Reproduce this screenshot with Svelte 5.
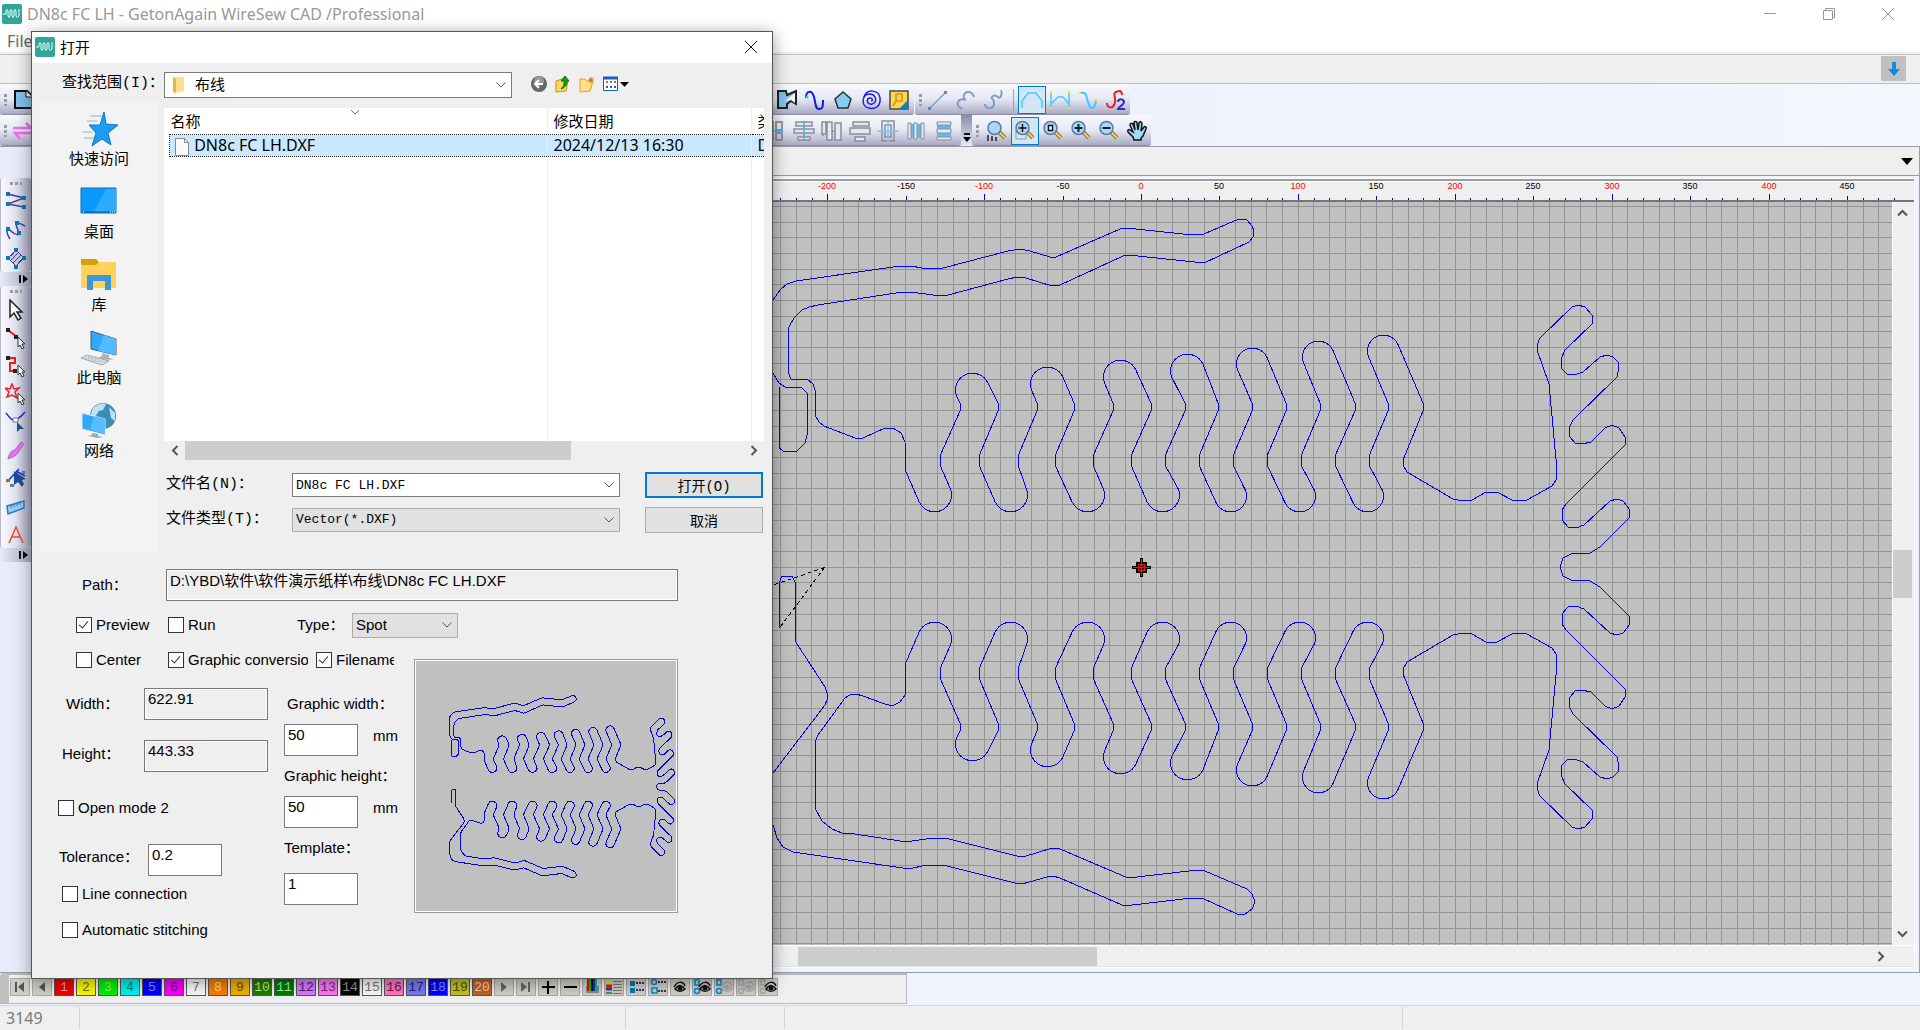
<script>
    // drawing space: one unit is one pixel, (ORIGIN_X, ORIGIN_Y) is the zero of the ruler
    const ORIGIN_X = 1141
    const ORIGIN_Y = 567
    const STEP = 15.69
    const LEFT = 48
    const TOP = 202

    const columns = []
    for (let i = -70; i <= 120; i++) columns.push(Math.round(ORIGIN_X - 0.2 + i * STEP))
    const rows = []
    for (let i = -30; i <= 60; i++) rows.push(Math.round(ORIGIN_Y - 0.2 + i * STEP))

    const ticks = []
    for (let v = -690; v <= 480; v += 10) {
        ticks.push({
            value: v,
            x: Math.round(ORIGIN_X + (v / 10) * STEP) - LEFT,
            size: v % 100 === 0 ? 6 : v % 50 === 0 ? 4 : 2,
        })
    }

    // serpentine: bottom caps, top caps and the knees between them
    const bottomCaps = [935, 1011, 1088, 1163, 1231, 1300, 1368]
    const topCaps = [[972, 372], [1047, 366], [1120, 359], [1187, 353], [1252, 347], [1318, 340], [1383, 334]]
    const upperKnees = [960, 998, 1037, 1074, 1113, 1151, 1185, 1218, 1252, 1286, 1320, 1355, 1388, 1423]
    const lowerKnees = [940, 979, 1018, 1055, 1093, 1131, 1165, 1199, 1233, 1267, 1301, 1335, 1369]

    function serpentine() {
        let d = "M905.7 471"
        for (let i = 0; i < 7; i++) {
            const r = i < 4 ? 17 : 16
            const dx = r * 0.93
            const dy = r * 0.36
            const bx = bottomCaps[i]
            const by = 513 - r
            const [tx, top] = topCaps[i]
            const ty = top + r
            d += `L${bx - dx} ${by + dy}A${r} ${r} 0 0 0 ${bx + dx} ${by - dy}`
            d += `L${lowerKnees[i * 2]} 465V456L${upperKnees[i * 2]} 411V403`
            d += `L${tx - dx} ${ty + dy}A${r} ${r} 0 0 1 ${tx + dx} ${ty - dy}`
            d += `L${upperKnees[i * 2 + 1]} 403V411`
            if (i < 6) d += `L${lowerKnees[i * 2 + 1]} 456V465`
        }
        return d + "L1403 460L1403 465L1407 472L1453 499L1463 501L1472 500L1486 492L1497 492L1512 500L1519 501L1527 500L1552 486L1556 480L1557 470L1549 384L1537 350V345L1540 338L1572 307L1578 305L1585 307L1592 315V324L1565 350L1561 359L1562 369L1567 374L1574 375L1583 372L1600 357L1607 355L1613 357L1618 362L1619 367L1617 377L1573 420L1569 428L1570 437L1575 443L1582 444L1591 442L1605 428L1612 425L1619 428L1625 437V445L1566 504L1562 510V520L1568 527L1576 528L1584 525L1610 501L1617 499L1623 501L1630 510L1629 518L1600 547L1590 553L1571 554L1563 558L1560 567"
    }

    const body = serpentine()
    const upperArm = "M779.5 387V448L783 451H797L805 443L807 435V393L801 387H785L779 383L774 375L770 366V318L773 300L780 290L787 284L796 281L900 266H911L922 268L933 268H943L1008 251L1020 249L1030 251L1050 257H1056L1120 229L1126 228L1193 235L1204 234L1234 221L1240 219L1247 220L1252 226L1254 231L1253 237L1249 242L1204 263L1128 255L1123 256L1060 285L1052 286L1026 278L1017 277L1008 279L948 295L933 295L911 292L896 293L818 305L809 307L802 310L794 318L789 327L788 335V372L791 379H807L813 384L815 390V415L819 422L824 426L855 438L863 438L885 428L893 428L901 433L905 442L905.7 471"
    const lowerArm = "M779.5 628V582L782 576H792L795 582V640L797 644L812 667L825 687L827 693V700L825 705L773 773L770 780V818L773 825L777 838L783 847L793 852L903 868H913L922 866L933 865H943L1015 883L1022 884L1047 877L1053 876L1060 878L1122 905H1132L1192 898H1202L1237 914H1245L1252 909L1255 902L1252 894L1247 889L1205 871L1198 870L1128 878L1060 849L1052 848L1023 857L1017 856L945 838H933L912 841H900L855 834L842 833L832 829L822 821L815 808V742L818 735L845 698L850 695L856 694L863 696L882 703L892 706L900 702L905 695L905.7 690V662"

    const glass = `<path d="M13 12l6 6" stroke="#7a7358" stroke-width="4"/><path d="M13 12l6 6" stroke="#f6cf5c" stroke-width="2"/><circle cx="8.500" cy="8" r="6.500" fill="#a9d9f2" stroke="#5a77a5" stroke-width="1.500"/>`
    const pointer = `<path d="M13 10v10l2-2 2 4 2-1-2-4h3z" fill="#fff" stroke="#333"/>`

    const icons = {
        page: `<path d="M3 2h12l5 5v12H3z" fill="#7fc3e8" stroke="#111" stroke-width="2"/><path d="M14 2v6h6" fill="#fff" stroke="#111"/>`,
        swap: `<path d="M1 8h18l-5-5M21 13H3l5 6" fill="none" stroke="#f06cf0" stroke-width="2.500"/>`,
        cut: `<path d="M2 2h8l1 4 9-4v13l-5-3-4 3v4H2z" fill="#7fc3e8" stroke="#222" stroke-width="2"/><path d="M9 12l10-8v10l-4-3z" fill="#f4f5fa"/>`,
        wave: `<path d="M2 9c0-8 6-8 8-1s1 12 5 12 4-3 4-9" fill="none" stroke="#1414e6" stroke-width="2"/><circle cx="3" cy="8" r="1.500" fill="#28c8ff"/>`,
        penta: `<path d="M11 3l8 7-3 9H6l-3-9z" fill="#87cdf0" stroke="#23333c" stroke-width="1.500"/>`,
        spiral: `<path d="M11 12c2 0 2-3-1-3s-4 5 0 6 7-3 5-7-9-4-11 0-1 10 5 11" fill="none" stroke="#1e1ee6" stroke-width="1.500"/><path d="M4 8C7-1 19 1 20 9s-5 12-11 10" fill="none" stroke="#1e1ee6" stroke-width="1.500"/>`,
        picture: `<path d="M2 2h18v18H2z" fill="#ffd84a" stroke="#3e4b58" stroke-width="1.500"/><path d="M11 20l9-9v9z" fill="#0082c8"/><path d="M8 5h6v7H8zM8 12l-3 5" fill="none" stroke="#e08a20" stroke-width="1.500"/>`,
        line: `<path d="M3 19L19 3" stroke="#7f9cc8" stroke-width="1.500"/><path d="M1 18h3v3H1zM17 2h3v3h-3z" fill="#6485b8"/>`,
        arc: `<path d="M7 20c-8-4-4-12 4-9M9 10C7 1 17 1 19 8" fill="none" stroke="#7f9cc8" stroke-width="2"/>`,
        ess: `<path d="M2 15c0 5 8 6 9 0s-5-5-1-8 6 5 8 0-1-5 1-5" fill="none" stroke="#7f9cc8" stroke-width="2"/>`,
        arch: `<path d="M1 19V12L7 4h8l6 8v7" fill="none" stroke="#3ecbff" stroke-width="1.500"/>`,
        fence: `<path d="M2 3v17M20 3v17M2 15l7-7h5l6 7" fill="none" stroke="#3ecbff" stroke-width="1.500"/><path d="M1 3h2M1 19h2M19 3h2M19 19h2" stroke="#ffe600" stroke-width="2"/>`,
        curve: `<path d="M3 4c8-2 6 5 8 9s1 6 4 6 3-3 4-8" fill="none" stroke="#3ecbff" stroke-width="2"/><path d="M2 4h2M18 11h2" stroke="#ffe600" stroke-width="2"/>`,
        two: `<path d="M2 14c0 6 7 6 8-1s-3-8 1-10 6-1 6 3" fill="none" stroke="#ee1c24" stroke-width="2"/><path d="M13 13c0-4 6-3 6 0s-6 5-6 7h7" fill="none" stroke="#2a2ad0" stroke-width="2"/>`,
        alignA: `<path d="M1 2h7v8H1zM11 2h6v8h-6zM1 13h7v7H1zM11 13h6v7h-6z" fill="none" stroke="#7e8088" stroke-width="1.500"/><path d="M0 11h18" stroke="#4fb4e6" stroke-width="2"/>`,
        alignB: `<path d="M11 1v20" stroke="#4fb4e6" stroke-width="2"/><path d="M3 2h16v4H3zM1 9h20v4H1zM5 17h12v3H5z" fill="#e5e7f2" stroke="#8b8d96" stroke-width="1.500"/><path d="M11 2v18" stroke="#4fb4e6" stroke-width="1.500"/>`,
        alignC: `<path d="M2 2v14M2 11h18" stroke="#6cb6dc" stroke-width="2"/><path d="M1 2h4v12H1zM6 2h5v18H6zM14 3h6v17h-6z" fill="#e5e7f2" stroke="#8b8d96" stroke-width="1.500"/>`,
        alignD: `<path d="M4 2h16v4H4zM1 8h20v6H1zM6 17h10v4H6z" fill="#e5e7f2" stroke="#8b8d96" stroke-width="1.500"/>`,
        alignE: `<path d="M5 1h12v20H5zM8 5h6v12H8z" fill="none" stroke="#8b8d96" stroke-width="1.500"/><path d="M0 11h22M11 0v22" stroke="#7cc8ee" stroke-width="1.500"/>`,
        bars: `<path d="M3 4h16v14H3z" fill="#64b8ea"/><path d="M3 3h3v16H3zM9 3h3v16H9zM16 3h3v16h-3z" fill="#e5e7f2" stroke="#8b8d96"/>`,
        stack: `<path d="M4 3h14v16H4z" fill="#64b8ea"/><path d="M4 2h14v3H4zM4 9h14v4H4zM4 17h14v3H4z" fill="#e5e7f2" stroke="#8b8d96"/>`,
        zoomAll: glass + `<path d="M2 21v-6M6 16v5M10 17v4" stroke="#222" stroke-width="1.500"/>`,
        zoomBox: `<path d="M2 10h10v9H2z" fill="none" stroke="#999"/>` + glass + `<path d="M8.500 4v8M4.500 8h8" stroke="#111" stroke-width="1.500"/>`,
        zoomOne: glass + `<path d="M6.500 5.500h4v5h-4z" fill="#fff" stroke="#111" stroke-width="1.500"/>`,
        zoomIn: glass + `<path d="M8.500 4v8M4.500 8h8" stroke="#123" stroke-width="2"/>`,
        zoomOut: glass + `<path d="M4.500 8h8" stroke="#123" stroke-width="2"/>`,
        hand: `<path d="M8 20l-1-3-5-5c-1-2 1-3 2-2l3 2-3-7c0-2 2-2 3-1l2 6-1-7c0-2 3-2 3 0l1 7 1-7c1-2 3-1 3 1l-1 7 3-4c1-1 3 0 2 2l-3 7-2 2v2z" fill="#a4daf6" stroke="#111" stroke-width="1.500"/>`,
        zed: `<path d="M3 3l16 4L3 13l16 3" fill="none" stroke="#4a3c8c" stroke-width="1.500"/><path d="M1 1h4v4H1zM17 5h4v4h-4zM1 11h4v4H1zM17 14h4v4h-4z" fill="#0878b8"/>`,
        spline: `<path d="M5 20C0 12 2 8 6 12s10 6 7-1-4-10 7-4" fill="none" stroke="#4a3c8c" stroke-width="1.500"/><path d="M1 8h4v4H1zM10 2h4v4h-4zM12 12h4v4h-4z" fill="#0878b8"/>`,
        hatch: `<path d="M11 3l8 8-8 8-8-8z" fill="#c9cbe4" stroke="#4a3c8c"/><path d="M6 13l7-7M8 16l8-8M6 9l3-3M13 16l4-4" stroke="#4a3c8c"/><path d="M9 1h4v4H9zM17 9h4v4h-4zM9 18h4v4H9zM1 9h4v4H1z" fill="#0878b8"/>`,
        select: `<path d="M5 1v17l4-4 4 7 3-2-4-6h5z" fill="#fff" stroke="#222" stroke-width="1.500"/>`,
        node: `<path d="M3 3l9 7" stroke="#ee1c24" stroke-width="2"/><path d="M1 1h4v4H1zM9 8h4v4H9z" fill="#222"/>` + pointer,
        chain: `<path d="M3 3h7v5H5v8h6" fill="none" stroke="#ee1c24" stroke-width="2"/><path d="M1 1h4v4H1zM8 14h4v4H8z" fill="#222"/>` + pointer,
        star: `<path d="M7 1l2 5 5-1-4 4 2 6-5-3-5 2 2-5-4-4 5 1z" fill="none" stroke="#ee1c24" stroke-width="1.500"/>` + pointer,
        bend: `<path d="M1 2c4 5 7 9 10 7s5-3 9-8" fill="none" stroke="#1c28e0" stroke-width="1.500"/><path d="M8 7h5v4H8z" fill="#fff" stroke="#777"/><path d="M12 11v10l3-3h4z" fill="#1b4f94"/>`,
        knife: `<path d="M3 20c1-6 4-9 7-9l6-8 3 2-5 7c-1 4-6 6-11 8z" fill="#f26cf2" stroke="#8c7ac0"/>`,
        reshape: `<path d="M2 15L14 2M11 4l9 5" stroke="#1c28e0" stroke-width="1.500"/><path d="M9 4v14l4-3 4 5 2-3-2-4 4-1z" fill="#1b4f94"/><path d="M1 12h4v3H1zM5 17h4v3H5zM17 4h3v3h-3z" fill="#777"/>`,
        ruler: `<path d="M2 11l17-5v7L3 19z" fill="#8fd0f4" stroke="#3c74b4" stroke-width="1.500"/><path d="M6 10v3M9 9v3M12 8v3M15 7v3" stroke="#3c74b4"/>`,
        letter: `<path d="M4 20L11 4l7 16M7 14h8" fill="none" stroke="#ee4a2c" stroke-width="1.500"/>`,
    }

    const rowOneTools = ["cut", "wave", "penta", "spiral", "picture"]
    const alignTools = ["alignA", "alignB", "alignC", "alignD", "alignE", "bars", "stack"]
    const zoomTools = ["zoomAll", "zoomBox", "zoomOne", "zoomIn", "zoomOut", "hand"]
    const drawTools = ["zed", "spline", "hatch"]
    const editTools = ["select", "node", "chain", "star", "bend", "knife", "reshape", "ruler", "letter"]

    const swatches = [
        ["#f00000", "#ff9090"], ["#f8f800", "#777700"], ["#00f000", "#88ff60"], ["#00f0f0", "#007878"],
        ["#0000f8", "#8890ff"], ["#f800f8", "#780078"], ["#f8f8f8", "#777"], ["#f87c00", "#ffe070"],
        ["#f0b000", "#704000"], ["#207800", "#b0f080"], ["#007800", "#a0f0a0"], ["#d878f8", "#502070"],
        ["#f878f0", "#802080"], ["#000", "#999"], ["#f8f8f8", "#777"], ["#f878c0", "#701050"],
        ["#7878f0", "#202080"], ["#0000f8", "#8890ff"], ["#c0c028", "#505000"], ["#c06028", "#ffd0a0"],
    ]

    const eye = (x, color) => `<path d="M${x} 9c3-6 9-6 11-1M${x + 1} 11c4-5 7-4 10 0-3 3-7 3-10 0z" fill="none" stroke="${color}" stroke-width="1.500"/><circle cx="${x + 6}" cy="10" r="2.500" fill="${color}"/>`
    const boxes = (color) => `<path d="M2 2h4v5H2z" fill="none" stroke="${color}" stroke-width="1.500"/><circle cx="4" cy="13" r="2.500" fill="none" stroke="${color}" stroke-width="1.500"/>`
    const paletteTools = [
        { name: "Next", svg: `<path d="M6 4l6 5-6 5z" fill="#666"/>` },
        { name: "Last", svg: `<path d="M4 4l6 5-6 5z" fill="#666"/><path d="M12 4v10" stroke="#666" stroke-width="2"/>` },
        { name: "Add", svg: `<path d="M9 3v13M3 9h13" stroke="#000" stroke-width="2"/>` },
        { name: "Remove", svg: `<path d="M3 9h13" stroke="#000" stroke-width="2"/>` },
        { name: "Thread chart", svg: `<path d="M3 8h13v7H3z" fill="#888"/><path d="M5 1v12" stroke="#e01010" stroke-width="2"/><path d="M7 1v12" stroke="#10c010" stroke-width="2"/><path d="M9 1v12" stroke="#111" stroke-width="2"/><path d="M11 1v12" stroke="#1030d0" stroke-width="2"/><path d="M13 1v12" stroke="#10b0a0" stroke-width="2"/>` },
        { name: "Colour list", svg: `<path d="M1 5h6" stroke="#f0e000" stroke-width="2"/><path d="M1 8h6" stroke="#d02020" stroke-width="3"/><path d="M1 11h6" stroke="#304080" stroke-width="3"/><path d="M1 15h6" stroke="#409060" stroke-width="2"/><path d="M8 3.500h9M8 6.500h9M8 9.500h9M8 12.500h9M8 15.500h9" stroke="#777"/>` },
        { name: "Filled view", svg: `<path d="M3 3h5v5H3zM3 10h5v5H3z" fill="#0078b8"/><path d="M9 5h8M9 12h8" stroke="#336" stroke-width="2" stroke-dasharray="2 1"/>` },
        { name: "Outline view", svg: `<circle cx="5" cy="4" r="2.500" fill="none" stroke="#0088cc" stroke-width="1.500"/><path d="M3 10h5v5H3z" fill="none" stroke="#0088cc" stroke-width="1.500"/><path d="M9 4h8M9 13h8" stroke="#336" stroke-width="2" stroke-dasharray="2 1"/>` },
        { name: "Show", svg: eye(3, "#111") },
        { name: "Show selected", svg: boxes("#0088cc") + eye(6, "#111") },
        { name: "Hide selected", svg: boxes("#0088cc") + eye(6, "#aaa") },
        { name: "Hide", svg: boxes("#aaa") + eye(6, "#aaa") },
        { name: "Show all", svg: boxes("#aaa") + eye(6, "#111") },
    ]

    const places = [
        { name: "快速访问", svg: `<path d="M24 2l2 12 12 1-10 8 3 12-9-6-10 7 4-13-7-8h11z" fill="#1e9cf0" stroke="#0a78cc"/><path d="M10 6h12M7 11h10M2 22h10M4 28h10" stroke="#78b8e8"/>` },
        { name: "桌面", svg: `<path d="M1 5h35v25H1z" fill="#0a9aff" stroke="#0a6cb8"/><path d="M14 29L26 6H36v23z" fill="#2eaaff"/><path d="M2 29h33" stroke="#0a5c9c"/><path d="M30 29h5M3 29h1" stroke="#fff" stroke-dasharray="1 1"/>` },
        { name: "库", svg: `<path d="M1 3h15l3 3h17v26H1z" fill="#dc9c08"/><path d="M1 9h15l3-3h17v25q0 1-1 1H2q-1 0-1-1z" fill="#ffd25c"/><path d="M7 34V20q0-1 1-1h22q1 0 1 1v14h-6v-9H13v9z" fill="#3c96dc"/>` },
        { name: "此电脑", svg: `<path d="M11 2l25 8v16l-25-6z" fill="#2ea8f8" stroke="#556"/><path d="M24 6l12 4v16l-18-4z" fill="#52baff"/><path d="M22 24l7 2v3l5 1-6 1-10-2 4-2z" fill="#aab4bc"/><path d="M1 29l6-3 22 6-7 4z" fill="#e2e6ea" stroke="#9aa"/><path d="M5 29l18 5M8 28l18 5" stroke="#aab" stroke-dasharray="2 1"/>` },
        { name: "网络", svg: `<circle cx="23" cy="14" r="13" fill="#3c8cb4"/><path d="M13 6q7-6 13-4l-3 6-4 1-4 6-5-1zM29 5l6 6v8l-4-3z" fill="#bce4f0"/><path d="M2 11l23 6v16l-23-6z" fill="#2ea8f8" stroke="#e4eaee"/><path d="M14 14l11 3v15l-15-4z" fill="#58bcff"/><path d="M12 31l6 1v2l5 1-5 1-10-2 4-1z" fill="#9aa8b0"/>` },
    ]

    let preview = $state(true)
    let run = $state(false)
    let center = $state(false)
    let conversion = $state(true)
    let filename = $state(true)
    let openMode = $state(false)
    let lineConnection = $state(false)
    let stitching = $state(false)
</script>

{#snippet tool(name, active = false)}
    <button class="tool" class:active aria-label={name}>
        <svg width="22" height="22" viewBox="0 0 22 22">{@html icons[name]}</svg>
    </button>
{/snippet}

{#snippet logo()}
    <svg class="logo" width="20" height="20" viewBox="0 0 20 20">
        <rect width="20" height="20" rx="2" fill="#2fa699" />
        <path d="M1 10h3V7q1-3 2 0v5q1 3 2 0V7q1-3 2 0v5q1 3 2 0V7q1-3 2 0v5q1 3 3 0V5" fill="none" stroke="#e8fffa" />
    </svg>
{/snippet}

{#snippet chevron()}
    <svg class="chevron" width="12" height="8" viewBox="0 0 12 8"><path d="M1.500 1.500l4.500 4.500 4.500-4.500" fill="none" stroke="#555" /></svg>
{/snippet}

{#snippet drawing()}
    <path d={upperArm} />
    <path d={body} />
    <path d={lowerArm} />
    <path d={body} transform="translate(0 1134) scale(1 -1)" />
{/snippet}

<div class="app">
    <header class="titlebar">
        {@render logo()}
        <span class="title">DN8c FC LH - GetonAgain WireSew CAD /Professional</span>
        <div class="window-buttons">
            <button aria-label="Minimize"><svg width="14" height="14"><path d="M1 6.500h12" stroke="#999" /></svg></button>
            <button aria-label="Restore"><svg width="14" height="14"><path d="M1.500 3.500h9v9h-9zM3.500 3V1.500h9v9H11" fill="none" stroke="#999" /></svg></button>
            <button aria-label="Close"><svg width="14" height="14"><path d="M1 1l12 12M13 1L1 13" stroke="#999" /></svg></button>
        </div>
    </header>
    <nav class="menubar"><button>File</button></nav>

    <div class="tabrow">
        <button class="down" aria-label="Scroll down">
            <svg width="14" height="16"><path d="M5 1h4v7h4l-6 7-6-7h4z" fill="#0a8ee0" /></svg>
        </button>
    </div>

    <div class="toolbars">
        <div class="toolrow">
            <div class="bar first">
                <i class="grip"></i>
                {@render tool("page")}
                <div class="push">
                    {#each rowOneTools as name}{@render tool(name)}{/each}
                </div>
            </div>
            <div class="bar">
                <i class="grip"></i>
                {@render tool("line")}
                {@render tool("arc")}
                {@render tool("ess")}
                <i class="divider"></i>
                {@render tool("arch", true)}
                {@render tool("fence")}
                {@render tool("curve")}
                {@render tool("two")}
            </div>
        </div>
        <div class="toolrow">
            <div class="bar second">
                <i class="grip"></i>
                {@render tool("swap")}
                <div class="push">
                    {#each alignTools as name}{@render tool(name)}{/each}
                </div>
            </div>
            <button class="more" aria-label="More tools">
                <svg width="8" height="10"><path d="M1 1h6" stroke="#111" stroke-width="2" /><path d="M0 4h8L4 9z" /></svg>
            </button>
            <div class="bar">
                <i class="grip wide"></i>
                {#each zoomTools as name, i}{@render tool(name, i === 1)}{/each}
            </div>
        </div>
    </div>

    <div class="workspace">
        <aside class="side">
            <div class="sidebar">
                <i class="grip flat"></i>
                {#each drawTools as name}{@render tool(name)}{/each}
            </div>
            <button class="side-more" aria-label="More draw tools"><svg width="9" height="8"><path d="M1 0v8" stroke="#111" stroke-width="2" /><path d="M4 0l5 4-5 4z" /></svg></button>
            <div class="sidebar">
                <i class="grip flat"></i>
                {#each editTools as name}{@render tool(name)}{/each}
            </div>
            <button class="side-more" aria-label="More edit tools"><svg width="9" height="8"><path d="M1 0v8" stroke="#111" stroke-width="2" /><path d="M4 0l5 4-5 4z" /></svg></button>
        </aside>

        <main class="document">
            <div class="tabstrip">
                <button aria-label="Tab list"><svg width="12" height="8"><path d="M0 1h12L6 8z" /></svg></button>
            </div>
            <div class="frame">
                <svg class="ruler" height="19">
                    {#each ticks as t}
                        <path d="M{t.x + 0.5} {18 - t.size}v{t.size}" stroke="#0000f0" />
                        {#if t.value % 50 === 0}
                            <text x={t.x} y="7" fill={t.value % 100 === 0 ? "#f00" : "#000"}>{t.value}</text>
                        {/if}
                    {/each}
                </svg>
                <div class="view">
                    <svg class="canvas">
                        <g transform="translate({-LEFT} {-TOP})" shape-rendering="crispEdges" fill="none">
                            <g stroke="#949494">
                                {#each columns as x}<path d="M{x + 0.5} 0V3000" />{/each}
                                {#each rows as y}<path d="M0 {y + 0.5}H4000" />{/each}
                            </g>
                            <g stroke="#0000f8">{@render drawing()}</g>
                            <g stroke="#000" stroke-dasharray="4 3">
                                <path d="M824.500 567.500L772 585.500M824.500 567.500L779.500 628" />
                            </g>
                            <path d="M1132 567.500h19M1141.500 558v19" stroke="#000" stroke-width="3" />
                            <path d="M1137 563h9v9h-9z" fill="#f01010" stroke="#000" stroke-width="2" />
                            <path d="M1133 567.500h17M1141.500 559v17" stroke="#f01010" />
                            <path d="M1139 565h2v2h-2zM1142 565h2v2h-2zM1139 568h2v2h-2zM1142 568h2v2h-2z" fill="#311" />
                        </g>
                    </svg>
                    <div class="vscroll">
                        <button aria-label="Up"><svg width="11" height="8"><path d="M1 6.500L5.500 2 10 6.500" fill="none" stroke="#555" stroke-width="2" /></svg></button>
                        <i class="thumb"></i>
                        <button aria-label="Down"><svg width="11" height="8"><path d="M1 1.500L5.500 6 10 1.500" fill="none" stroke="#555" stroke-width="2" /></svg></button>
                    </div>
                </div>
                <div class="hscroll">
                    <i class="thumb"></i>
                    <button aria-label="Right"><svg width="8" height="11"><path d="M1.500 1L6 5.500 1.500 10" fill="none" stroke="#555" stroke-width="2" /></svg></button>
                </div>
            </div>
        </main>
    </div>

    <div class="palette-row">
        <div class="palette">
            <button aria-label="First"><svg width="18" height="18"><path d="M5 4v10" stroke="#555" stroke-width="2" /><path d="M13 4L7 9l6 5z" fill="#555" /></svg></button>
            <button aria-label="Previous"><svg width="18" height="18"><path d="M12 4L6 9l6 5z" fill="#555" /></svg></button>
            {#each swatches as [color, ink], i}
                <button class="swatch" style="background: {color}; color: {ink}">{i + 1}</button>
            {/each}
            {#each paletteTools as item}
                <button aria-label={item.name}><svg width="18" height="18">{@html item.svg}</svg></button>
            {/each}
        </div>
    </div>

    <footer class="status">
        <span class="s1">3149</span><span class="s2"></span><span class="s3"></span><span class="s4"></span>
    </footer>

    <div class="dialog" role="dialog" aria-label="打开">
        <div class="dialog-title">
            {@render logo()}
            <span>打开</span>
            <button aria-label="Close dialog"><svg width="14" height="14"><path d="M1 1l12 12M13 1L1 13" stroke="#111" /></svg></button>
        </div>

        <div class="lookin">
            <label class="song" for="lookin">查找范围(I)：</label>
            <div class="field folder">
                <svg class="folder-icon" width="14" height="18"><path d="M1 1h11v14l-9 2-2-1z" fill="#ffe08a" /><path d="M1 1l3 2v14l-3-1z" fill="#e8b840" /></svg>
                <select id="lookin"><option>布线</option></select>
                {@render chevron()}
            </div>
            <div class="nav-buttons">
                <button aria-label="Back"><svg width="18" height="18"><circle cx="9" cy="9" r="8" fill="#666" /><circle cx="9" cy="6" r="5" fill="#999" /><path d="M13 9H6M9 5L5 9l4 4" fill="none" stroke="#fff" stroke-width="2" /></svg></button>
                <button aria-label="Up one level"><svg width="18" height="18"><path d="M2 6l6-2 6 2-2 10-10 1z" fill="#ffd860" stroke="#c89020" /><path d="M7 14q4-3 3-8H7l4-5 4 5h-2q0 6-6 8z" fill="#18a018" stroke="#0c700c" /></svg></button>
                <button aria-label="New folder"><svg width="18" height="18"><path d="M2 4h5l2 2h6l-3 10-10 1z" fill="#ffe08a" stroke="#d8a030" /><path d="M13 2v6M10 5h6M11 3l4 4M15 3l-4 4" stroke="#f06020" /></svg></button>
                <button aria-label="View menu"><svg width="27" height="18"><path d="M1.500 2.500h14v13h-14z" fill="#fff" stroke="#1c5cc0" /><path d="M1 3h15" stroke="#1c5cc0" stroke-width="3" /><path d="M4 7h2M8 7h2M12 7h2" stroke="#777" stroke-width="2" /><path d="M4 12h2" stroke="#c03020" stroke-width="2" /><path d="M8 12h6" stroke="#2060c0" stroke-width="2" stroke-dasharray="2" /><path d="M18 7h9l-4.500 5z" /></svg></button>
            </div>
        </div>

        <div class="browser">
            <div class="places">
                {#each places as place}
                    <button>
                        <svg width="38" height="38">{@html place.svg}</svg>
                        <span>{place.name}</span>
                    </button>
                {/each}
            </div>
            <div class="files">
                <div class="list">
                    <svg class="sort" width="10" height="6"><path d="M1 1l4 4 4-4" fill="none" stroke="#777" /></svg>
                    <table>
                        <thead>
                            <tr><th class="c1">名称</th><th class="c2">修改日期</th><th class="c3">类型</th></tr>
                        </thead>
                        <tbody>
                            <tr class="selected">
                                <td>
                                    <svg width="16" height="18"><path d="M1.500.5h9l4 4v13h-13z" fill="#fafafa" stroke="#8a8a8a" /><path d="M10.500.5v4h4" fill="none" stroke="#8a8a8a" /></svg>
                                    DN8c FC LH.DXF
                                </td>
                                <td>2024/12/13 16:30</td>
                                <td>DXF</td>
                            </tr>
                            <tr class="rest"><td></td><td></td><td></td></tr>
                        </tbody>
                    </table>
                </div>
                <div class="list-scroll">
                    <button aria-label="Scroll left"><svg width="8" height="11"><path d="M6.500 1L2 5.500 6.500 10" fill="none" stroke="#555" stroke-width="2" /></svg></button>
                    <i class="thumb"></i>
                    <button class="end" aria-label="Scroll right"><svg width="8" height="11"><path d="M1.500 1L6 5.500 1.500 10" fill="none" stroke="#555" stroke-width="2" /></svg></button>
                </div>
                <div class="name-row">
                    <label class="song" for="fname">文件名(N)：</label>
                    <div class="field name"><input id="fname" class="mono" value="DN8c FC LH.DXF" />{@render chevron()}</div>
                    <button class="push-button primary">打开(O)</button>
                </div>
                <div class="name-row">
                    <label class="song" for="ftype">文件类型(T)：</label>
                    <div class="field type"><select id="ftype" class="mono"><option>Vector(*.DXF)</option></select>{@render chevron()}</div>
                    <button class="push-button">取消</button>
                </div>
            </div>
        </div>

        <div class="path-row">
            <label for="path">Path：</label>
            <input id="path" class="box sunken" readonly value="D:\YBD\软件\软件演示纸样\布线\DN8c FC LH.DXF" />
        </div>

        <div class="checks one">
            <label class="check w92"><input type="checkbox" bind:checked={preview} />Preview</label>
            <label class="check w92"><input type="checkbox" bind:checked={run} />Run</label>
            <label class="type-label" for="type">Type：</label>
            <div class="field spot"><select id="type"><option>Spot</option></select>{@render chevron()}</div>
        </div>

        <div class="lower">
            <div class="options">
                <div class="checks two">
                    <label class="check w92"><input type="checkbox" bind:checked={center} />Center</label>
                    <label class="check w140"><input type="checkbox" bind:checked={conversion} />Graphic conversion</label>
                    <label class="check w78"><input type="checkbox" bind:checked={filename} />Filename</label>
                </div>
                <div class="split">
                    <div class="col-a">
                        <div class="line width">
                            <label for="w">Width：</label><input id="w" class="box sunken wide" readonly value="622.91" />
                        </div>
                        <div class="line height">
                            <label for="h">Height：</label><input id="h" class="box sunken wide" readonly value="443.33" />
                        </div>
                        <label class="check mode"><input type="checkbox" bind:checked={openMode} />Open mode 2</label>
                        <div class="line tolerance">
                            <label for="tol">Tolerance：</label><input id="tol" class="box" value="0.2" />
                        </div>
                        <label class="check conn"><input type="checkbox" bind:checked={lineConnection} />Line connection</label>
                        <label class="check auto"><input type="checkbox" bind:checked={stitching} />Automatic stitching</label>
                    </div>
                    <div class="col-b">
                        <label class="indent" for="gw">Graphic width：</label>
                        <div class="line"><input id="gw" class="box" value="50" /><span>mm</span></div>
                        <label for="gh">Graphic height：</label>
                        <div class="line"><input id="gh" class="box" value="50" /><span>mm</span></div>
                        <label for="tpl">Template：</label>
                        <div class="line last"><input id="tpl" class="box" value="1" /></div>
                    </div>
                </div>
            </div>
            <div class="preview">
                <svg width="260" height="250">
                    <g class="mini" transform="translate(-169 -23) scale(.2625)" shape-rendering="crispEdges" fill="none" stroke="#0000f8">
                        {@render drawing()}
                    </g>
                </svg>
            </div>
        </div>
    </div>
</div>

<style>
    :global(body) {
        margin: 0;
        overflow: hidden;
    }
    .app {
        position: relative;
        display: flex;
        flex-direction: column;
        height: 100vh;
        overflow: hidden;
        background: #eff3fd;
        font-family: "Noto Sans", "Noto Sans CJK SC", sans-serif;
        font-size: 15px;
        line-height: 20px;
        color: #000;
    }
    .app :global(svg) {
        display: block;
        flex: none;
    }
    button {
        display: flex;
        align-items: center;
        justify-content: center;
        margin: 0;
        padding: 0;
        border: none;
        background: none;
        font: inherit;
        color: inherit;
    }
    input,
    select {
        box-sizing: border-box;
        margin: 0;
        border-radius: 0;
        font: inherit;
        color: inherit;
    }

    .titlebar {
        display: flex;
        align-items: center;
        height: 28px;
        padding-left: 2px;
        background: #fff;
        color: #999;
        font-size: 16px;
    }
    .title {
        margin-left: 5px;
    }
    .window-buttons {
        display: flex;
        margin-left: auto;
    }
    .window-buttons button {
        width: 59px;
        height: 28px;
    }
    .window-buttons button:last-child {
        margin-right: 3px;
    }
    .menubar {
        height: 24px;
        padding-left: 7px;
        background: #fff;
        color: #666;
        font-size: 16px;
    }
    .menubar button {
        height: 26px;
    }
    .tabrow {
        display: flex;
        justify-content: flex-end;
        box-sizing: border-box;
        height: 32px;
        padding: 2px 14px 0 0;
        border-top: 2px solid #f0f0f0;
        border-bottom: 1px solid #bdbdbd;
        background: #efefef;
        box-shadow: inset 0 1px #c0c0c0;
    }
    .down {
        width: 25px;
        height: 25px;
        background: #c0c0c0;
    }

    .toolbars {
        height: 62px;
        border-bottom: 1px solid #9a9ba0;
        background: linear-gradient(90deg, #e9ecfb, #f2f6ff);
    }
    .toolrow {
        display: flex;
        height: 31px;
    }
    .bar {
        display: flex;
        align-items: center;
        box-sizing: border-box;
        height: 31px;
        margin-right: 1px;
        padding: 2px 0 0 4px;
        border-bottom: 1px solid #8c8da4;
        border-radius: 3px;
        background: linear-gradient(#f8f9fd, #e6e8f3 50%, #a9abc4);
    }
    .bar.first {
        width: 914px;
        padding-right: 1px;
    }
    .bar.second {
        width: 961px;
        margin-right: 0;
        padding-right: 3px;
    }
    .push {
        display: flex;
        margin-left: auto;
    }
    .grip {
        width: 3px;
        height: 12px;
        margin-right: 2px;
        background: repeating-linear-gradient(#999aa8 0 3px, transparent 3px 5px);
    }
    .grip.wide {
        margin-right: 4px;
    }
    .grip.flat {
        width: 12px;
        height: 3px;
        margin: 4px 0 3px;
        background: repeating-linear-gradient(90deg, #999aa8 0 3px, transparent 3px 5px);
    }
    .tool {
        box-sizing: border-box;
        width: 28px;
        height: 28px;
    }
    .tool.active {
        border: 1px solid #0078d7;
        background: #d3e6f5;
    }
    .divider {
        width: 1px;
        height: 22px;
        margin: 0 4px 0 5px;
        background: #a0a0b0;
    }
    .more {
        align-items: flex-end;
        box-sizing: border-box;
        width: 11px;
        padding-bottom: 3px;
        background: linear-gradient(#8a8ba6, #e8eaf5);
    }

    .workspace {
        display: flex;
        flex: 1;
        min-height: 0;
    }
    .side {
        width: 31px;
        padding: 31px 17px 0 0;
        background: #e9ebfb;
    }
    .side > * {
        width: 31px;
    }
    .sidebar {
        display: flex;
        flex-direction: column;
        align-items: center;
        box-sizing: border-box;
        border-left: 1px solid #b5b7cc;
        border-radius: 3px;
        background: linear-gradient(90deg, #f8f9fd, #e0e2ef 50%, #a4a6c0);
    }
    .side-more {
        justify-content: flex-end;
        box-sizing: border-box;
        height: 14px;
        padding-right: 3px;
        background: linear-gradient(90deg, #e8eaf5, #a9abc4);
    }
    .document {
        display: flex;
        flex: 1;
        flex-direction: column;
        min-width: 0;
        border-right: 1px solid #9aa0a8;
    }
    .tabstrip {
        display: flex;
        justify-content: flex-end;
        height: 28px;
        padding-right: 6px;
        border-bottom: 1px solid #9a9ba0;
        background: #efefef;
    }
    .frame {
        display: flex;
        flex: 1;
        flex-direction: column;
        min-height: 0;
        margin: 3px 5px 5px 0;
        border-top: 2px solid #9c9c9c;
        background: #efefef;
        outline: 1px solid #fff;
    }
    .ruler {
        width: 100%;
        border-top: 1px solid #fff;
        box-sizing: border-box;
        background: #efefef;
        font: 9px "Liberation Sans", sans-serif;
        text-anchor: middle;
    }
    .view {
        display: flex;
        flex: 1;
        min-height: 0;
        border-top: 2px solid #757575;
    }
    .canvas {
        flex: 1 1 0 !important;
        min-width: 0;
        height: 100%;
        background: #c0c0c0;
    }
    .vscroll {
        display: flex;
        flex-direction: column;
        align-items: center;
        justify-content: space-between;
        width: 19px;
        margin-right: 2px;
        border-left: 1px solid #fff;
    }
    .vscroll button {
        height: 22px;
    }
    .vscroll .thumb {
        width: 19px;
        height: 48px;
        background: #cdcdcd;
    }
    .hscroll {
        display: flex;
        justify-content: space-between;
        align-items: center;
        height: 20px;
        padding: 0 29px 0 750px;
        border-top: 1px solid #fff;
        border-bottom: 1px solid #e0e0e0;
    }
    .hscroll .thumb {
        width: 299px;
        height: 19px;
        background: #cdcdcd;
    }

    .palette-row {
        display: flex;
        height: 32px;
        border-top: 1px solid #9aa0a8;
    }
    .palette {
        display: flex;
        gap: 2px;
        box-sizing: border-box;
        width: 907px;
        height: 31px;
        padding: 3px 0 0 1px;
        border: 1px solid #b8b8b8;
        border-left: 9px solid #c0c0c0;
        border-top-width: 2px;
        border-radius: 4px 0 0 0;
        background: #efefef;
    }
    .palette button {
        box-sizing: border-box;
        width: 20px;
        height: 18px;
        border: 1px solid #a8a8a4;
        background: #cfccc6;
    }
    .palette .swatch {
        border-color: #555;
        font: 13px "Liberation Mono", monospace;
    }
    .status {
        display: flex;
        box-sizing: border-box;
        height: 25px;
        padding-top: 1px;
        border-top: 1px solid #d4d4d4;
        background: #efefef;
        color: #777;
        font-size: 16px;
    }
    .status span {
        box-sizing: border-box;
        height: 22px;
        padding-top: 1px;
        border-right: 1px solid #d4d4d4;
    }
    .s1 {
        width: 80px;
        padding-left: 6px;
    }
    .s2 {
        width: 546px;
    }
    .s3 {
        width: 159px;
    }
    .s4 {
        width: 618px;
    }

    .dialog {
        position: absolute;
        top: 31px;
        left: 31px;
        box-sizing: border-box;
        width: 742px;
        height: 948px;
        border: 1px solid #555;
        background: #efefef;
        box-shadow: 0 3px 16px rgba(0, 0, 0, 0.4);
    }
    .dialog-title {
        display: flex;
        align-items: center;
        box-sizing: border-box;
        height: 31px;
        padding: 0 0 2px 3px;
        background: #fff;
    }
    .dialog-title span {
        margin-left: 5px;
    }
    .dialog-title button {
        width: 42px;
        height: 29px;
        margin-left: auto;
    }
    .song {
        font-family: "Liberation Mono", "Noto Sans CJK SC", monospace;
        white-space: nowrap;
    }
    .mono {
        font-family: "Liberation Mono", monospace;
        font-size: 13px;
    }
    .field {
        position: relative;
        display: flex;
    }
    .field select,
    .field input {
        width: 100%;
        height: 100%;
        padding: 0 3px;
        border: 1px solid #7a7a7a;
        background: #fff;
        appearance: none;
    }
    .field.folder select {
        padding: 0 30px 2px;
    }
    .chevron {
        position: absolute;
        top: 50%;
        right: 5px;
        margin-top: -4px;
        pointer-events: none;
    }
    .lookin {
        display: flex;
        align-items: center;
        height: 26px;
        padding: 9px 0 10px 30px;
    }
    .lookin label {
        width: 102px;
        margin-bottom: 2px;
    }
    .field.folder {
        width: 348px;
        height: 26px;
    }
    .folder-icon {
        position: absolute;
        top: 4px;
        left: 8px;
    }
    .nav-buttons {
        display: flex;
        gap: 6px;
        margin: 0 0 3px 18px;
    }
    .browser {
        display: flex;
        height: 450px;
        margin-top: -6px;
        padding: 0 8px;
    }
    .places {
        display: flex;
        flex-direction: column;
        box-sizing: border-box;
        width: 118px;
        margin-right: 6px;
        padding-top: 8px;
        background: #f3f3f3;
    }
    .places button {
        flex-direction: column;
        justify-content: flex-start;
        height: 73px;
    }
    .files {
        flex: 1;
        min-width: 0;
        padding-top: 6px;
    }
    .list {
        position: relative;
        height: 333px;
        overflow: hidden;
        background: #fff;
    }
    .sort {
        position: absolute;
        top: 1px;
        left: 186px;
    }
    table {
        width: 700px;
        height: 333px;
        margin-left: 5px;
        border-collapse: collapse;
        table-layout: fixed;
    }
    th,
    td {
        padding: 0 0 0 6px;
        border-right: 1px solid #e5f0fa;
        font-weight: 400;
        text-align: left;
        white-space: nowrap;
    }
    th:first-child {
        padding-left: 1px;
    }
    th {
        height: 26px;
    }
    .c1 {
        width: 376px;
    }
    .c2 {
        width: 197px;
    }
    .selected td {
        height: 20px;
        border-top: 1px dotted #222;
        border-bottom: 1px dotted #222;
        background: #cce8ff;
        font-size: 16px;
    }
    .selected td:first-child {
        padding-left: 4px;
        border-left: 1px dotted #222;
    }
    .selected svg {
        display: inline-block;
        vertical-align: middle;
    }
    .rest td {
        height: auto;
    }
    .list-scroll {
        display: flex;
        align-items: center;
        height: 19px;
        margin-bottom: 12px;
    }
    .list-scroll button {
        width: 21px;
    }
    .list-scroll .thumb {
        width: 386px;
        height: 19px;
        background: #cdcdcd;
    }
    .list-scroll .end {
        margin-left: auto;
    }
    .name-row {
        display: flex;
        align-items: center;
        height: 26px;
        margin-bottom: 9px;
    }
    .name-row label {
        flex: none;
        width: 126px;
        padding-left: 2px;
    }
    .field.name,
    .field.type {
        width: 328px;
        height: 24px;
        margin-right: 25px;
    }
    .field.type select,
    .field.spot select {
        border-color: #adadad;
        background: #e1e1e1;
    }
    .push-button {
        flex: 1;
        box-sizing: border-box;
        height: 26px;
        margin-right: 1px;
        border: 1px solid #adadad;
        background: #e1e1e1;
        font: 14px "Liberation Mono", "Noto Sans CJK SC", monospace;
    }
    .push-button.primary {
        border: 2px solid #0078d7;
    }

    .path-row,
    .checks,
    .lower {
        font-family: "Liberation Sans", "Noto Sans CJK SC", sans-serif;
    }
    .path-row {
        display: flex;
        align-items: center;
        margin-top: 17px;
        padding-left: 50px;
    }
    .path-row label {
        width: 84px;
    }
    .path-row .box {
        width: 512px;
    }
    .box {
        width: 74px;
        height: 32px;
        padding: 0 3px 11px 3px;
        border: 1px solid #7a7a7a;
        background: #fff;
    }
    .box.sunken {
        background: #efefef;
        box-shadow: inset 0 0 0 1px #fff;
    }
    .box.wide {
        width: 124px;
    }
    .checks {
        display: flex;
        align-items: center;
        padding-left: 44px;
    }
    .checks.one {
        height: 26px;
        margin-top: 11px;
    }
    .checks.two {
        height: 20px;
        padding-top: 12px;
    }
    .check {
        display: flex;
        align-items: center;
        gap: 4px;
        height: 20px;
        overflow: hidden;
        white-space: nowrap;
    }
    .check input {
        position: relative;
        flex: none;
        width: 16px;
        height: 16px;
        border: 1px solid #333;
        background: #fff;
        appearance: none;
    }
    .check input:checked::after {
        content: "";
        position: absolute;
        top: 1px;
        left: 4px;
        width: 4px;
        height: 8px;
        border: solid #333;
        border-width: 0 1px 1px 0;
        transform: rotate(40deg);
    }
    .w92 {
        width: 92px;
    }
    .w140 {
        width: 140px;
        margin-right: 8px;
    }
    .w78 {
        width: 78px;
    }
    .type-label {
        width: 55px;
        margin-left: 37px;
    }
    .field.spot {
        width: 106px;
        height: 25px;
    }
    .lower {
        display: flex;
        align-items: flex-start;
    }
    .options {
        width: 382px;
    }
    .split {
        display: flex;
    }
    .col-a {
        display: flex;
        flex-direction: column;
        width: 252px;
        padding-top: 18px;
    }
    .line {
        display: flex;
        align-items: center;
    }
    .width {
        padding-left: 34px;
    }
    .width label {
        width: 78px;
    }
    .height {
        margin-top: 20px;
        padding-left: 30px;
    }
    .height label {
        width: 82px;
        margin-bottom: 4px;
    }
    .mode {
        margin: 26px 0 26px 26px;
    }
    .tolerance {
        padding-left: 27px;
    }
    .tolerance label {
        width: 89px;
        margin-bottom: 6px;
    }
    .conn {
        margin: 8px 0 16px 30px;
    }
    .auto {
        margin-left: 30px;
    }
    .col-b {
        padding-top: 24px;
    }
    .col-b label {
        display: block;
        white-space: nowrap;
    }
    .col-b .indent {
        padding-left: 3px;
    }
    .col-b .line {
        margin: 10px 0;
    }
    .col-b .line.last {
        margin-top: 15px;
    }
    .col-b span {
        margin: 0 0 8px 15px;
    }
    .preview {
        margin-top: 21px;
        padding: 1px;
        border: 1px solid #9a9a9a;
        background: #fff;
    }
    .preview svg {
        background: #c0c0c0;
    }
    .mini :global(path) {
        vector-effect: non-scaling-stroke;
    }
</style>
